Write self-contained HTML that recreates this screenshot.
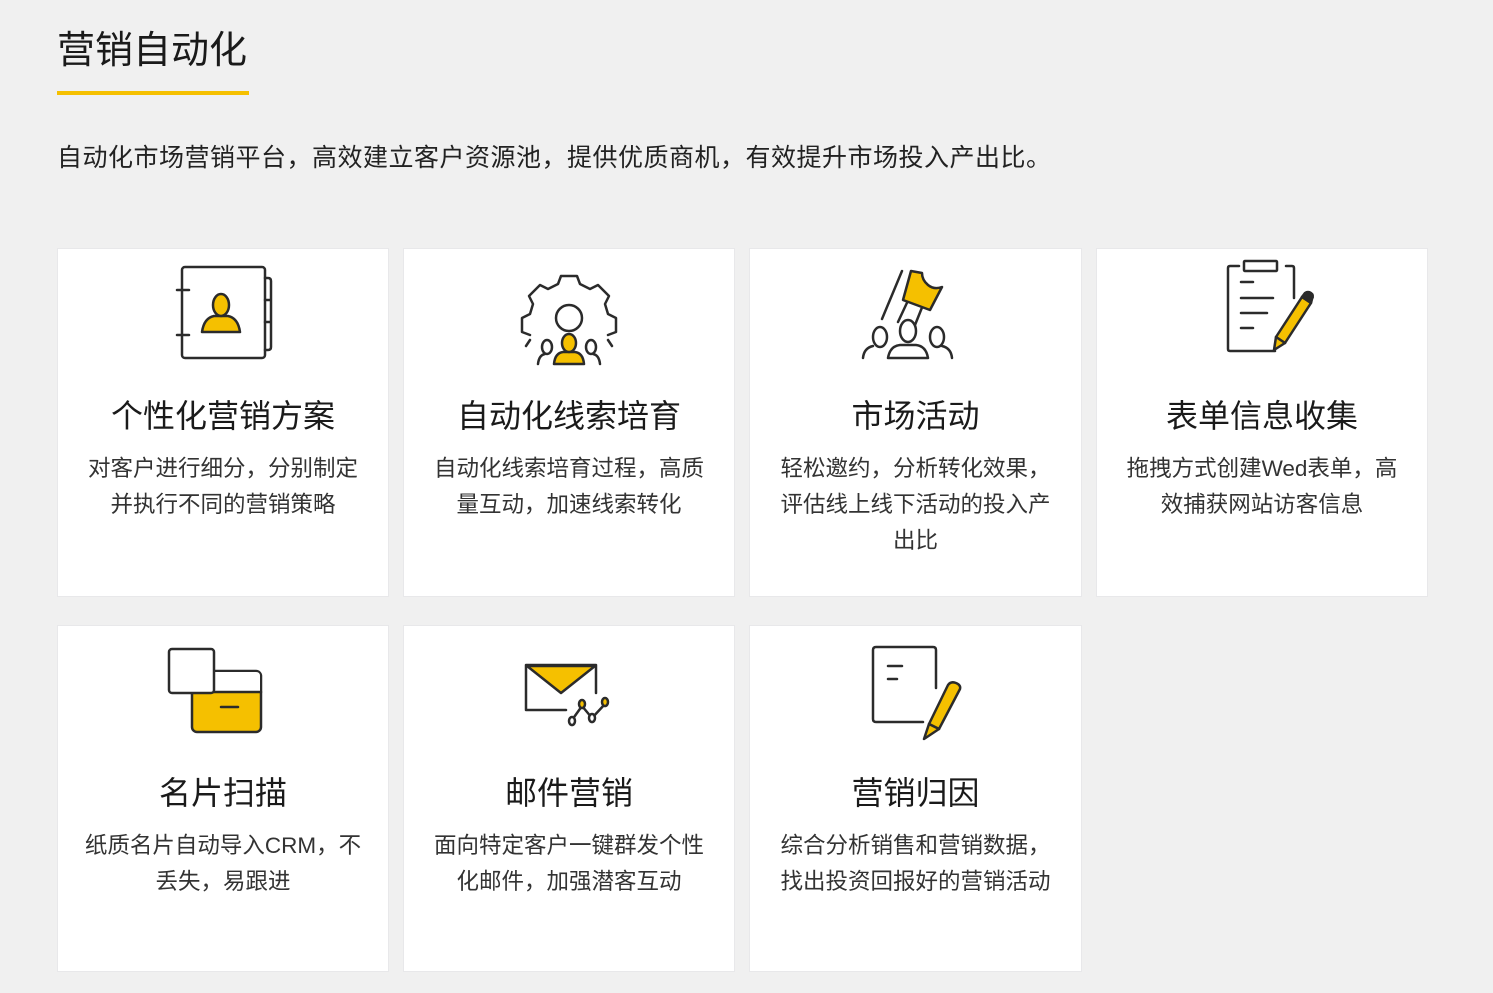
<!DOCTYPE html>
<html><head><meta charset="utf-8"><style>
body{margin:0;background:#f0f0f0;width:1493px;height:993px;overflow:hidden;position:relative;font-family:"Liberation Sans","Noto Sans CJK SC",sans-serif;color:#222}
.t{position:absolute;left:57px;top:25px;font-size:38px;line-height:52px;color:#1a1a1a}
.u{position:absolute;left:57px;top:91px;width:192px;height:4px;background:#f5c000}
.s{position:absolute;left:57px;top:140px;font-size:25px;line-height:36px;color:#222;letter-spacing:0.5px}
.c{position:absolute;width:330px;height:347px;background:#fff;text-align:center;box-shadow:0 0 0 1px #e8e8ea}
.c h3{margin:0;position:absolute;top:145px;left:0;right:0;font-weight:normal;font-size:32px;line-height:44px;color:#1a1a1a}
.c p{margin:0;position:absolute;top:202px;left:0;right:0;font-size:22.5px;line-height:36px;color:#333;white-space:nowrap}
svg{position:absolute;left:0;top:0}
</style></head><body>
<div class="t">营销自动化</div><div class="u"></div>
<div class="s">自动化市场营销平台，高效建立客户资源池，提供优质商机，有效提升市场投入产出比。</div>

<div class="c" style="left:58px;top:249px"><h3>个性化营销方案</h3><p>对客户进行细分，分别制定<br>并执行不同的营销策略</p></div>
<div class="c" style="left:404px;top:249px"><h3>自动化线索培育</h3><p>自动化线索培育过程，高质<br>量互动，加速线索转化</p></div>
<div class="c" style="left:750px;top:249px;width:331px"><h3>市场活动</h3><p>轻松邀约，分析转化效果，<br>评估线上线下活动的投入产<br>出比</p></div>
<div class="c" style="left:1097px;top:249px"><h3>表单信息收集</h3><p>拖拽方式创建Wed表单，高<br>效捕获网站访客信息</p></div>
<div class="c" style="left:58px;top:626px;height:345px"><h3>名片扫描</h3><p>纸质名片自动导入CRM，不<br>丢失，易跟进</p></div>
<div class="c" style="left:404px;top:626px;height:345px"><h3>邮件营销</h3><p>面向特定客户一键群发个性<br>化邮件，加强潜客互动</p></div>
<div class="c" style="left:750px;top:626px;width:331px;height:345px"><h3>营销归因</h3><p>综合分析销售和营销数据，<br>找出投资回报好的营销活动</p></div>

<svg width="1493" height="993" fill="none" stroke="#2b2b2b" stroke-width="2.5" stroke-linejoin="round" stroke-linecap="round">
<rect x="182" y="267" width="83" height="91" rx="3"/>
<path d="M265 278h3q3 0 3 3v66q0 3-3 3h-3M265 300h5M265 322h5M177 290h12M177 335h12"/>
<path d="M202 332q2-14 12-16h14q10 2 12 16z" fill="#f5c000"/>
<ellipse cx="221" cy="305" rx="8" ry="11" fill="#f5c000"/>
<path d="M561 276h16l3 8 10 5 8-4 11 11-4 8 3 10 8 4v14l-8 3M561 276l-3 8-10 5-8-4-11 11 4 8-3 10-8 4v14l8 3M530 340l-4 6M608 340l4 6"/>
<circle cx="569" cy="318" r="13"/>
<path d="M538 364q1-9 7-10M600 364q-1-9-7-10"/>
<ellipse cx="547" cy="347" rx="5" ry="7"/><ellipse cx="591" cy="347" rx="5" ry="7"/>
<path d="M554 364q1-11 9-12h12q8 1 9 12z" fill="#f5c000"/>
<ellipse cx="569" cy="343" rx="7" ry="9" fill="#f5c000"/>
<path d="M902 271l-20 48M912 292l-14 30M923 305l-8 20"/>
<path d="M911 271l-8 29 27 10 12-23q-8 3-14-2t-6-12z" fill="#f5c000"/>
<ellipse cx="880" cy="337" rx="7" ry="10"/><ellipse cx="908" cy="331" rx="8" ry="11"/><ellipse cx="937" cy="337" rx="7" ry="10"/>
<path d="M863 358q1-10 10-12M888 358q2-12 12-13h16q10 1 12 13zM952 358q-1-10-10-12"/>
<path d="M1239 266h-9q-2 0-2 2v81q0 2 2 2h45M1286 266h6q2 0 2 2v30"/>
<rect x="1244" y="261" width="33" height="10" rx="1"/>
<path d="M1241 282h12M1241 298h32M1241 313h26M1241 328h12"/>
<path d="M1302 297l9 6-26 40-9-6z" fill="#f5c000"/><path d="M1276 337l-2 13 11-7z" fill="#f5c000"/>
<path d="M1302 297l3-4q3-2 6 0t1 6l-1 4z" fill="#2b2b2b"/>
<rect x="192" y="671" width="69" height="61" rx="5" fill="#f5c000"/>
<path d="M193 692h67v-16q0-4-4-4h-60q-4 0-4 4z" fill="#fff" stroke="none"/>
<path d="M192 692h69"/>
<rect x="169" y="649" width="45" height="44" rx="3" fill="#fff"/>
<path d="M221 707h17"/>
<path d="M566 710h-40v-45h70v28"/>
<path d="M527 666l34 27 34-27z" fill="#f5c000"/>
<path d="M572 720l10-14 10 12 13-14"/>
<ellipse cx="572" cy="721" rx="3" ry="4" fill="#fff"/><ellipse cx="582" cy="704" rx="3" ry="4" fill="#f5c000"/><ellipse cx="592" cy="718" rx="3" ry="4" fill="#fff"/><ellipse cx="605" cy="702" rx="3" ry="4" fill="#f5c000"/>
<path d="M923 722h-47q-3 0-3-3v-69q0-3 3-3h57q3 0 3 3v38"/>
<path d="M888 666h14M888 679h9"/>
<path d="M948 685q3-4 8-2t4 6l-21 40-10-5z" fill="#f5c000"/>
<path d="M929 724l-5 15 15-10z" fill="#f5c000"/>
</svg>
</body></html>
